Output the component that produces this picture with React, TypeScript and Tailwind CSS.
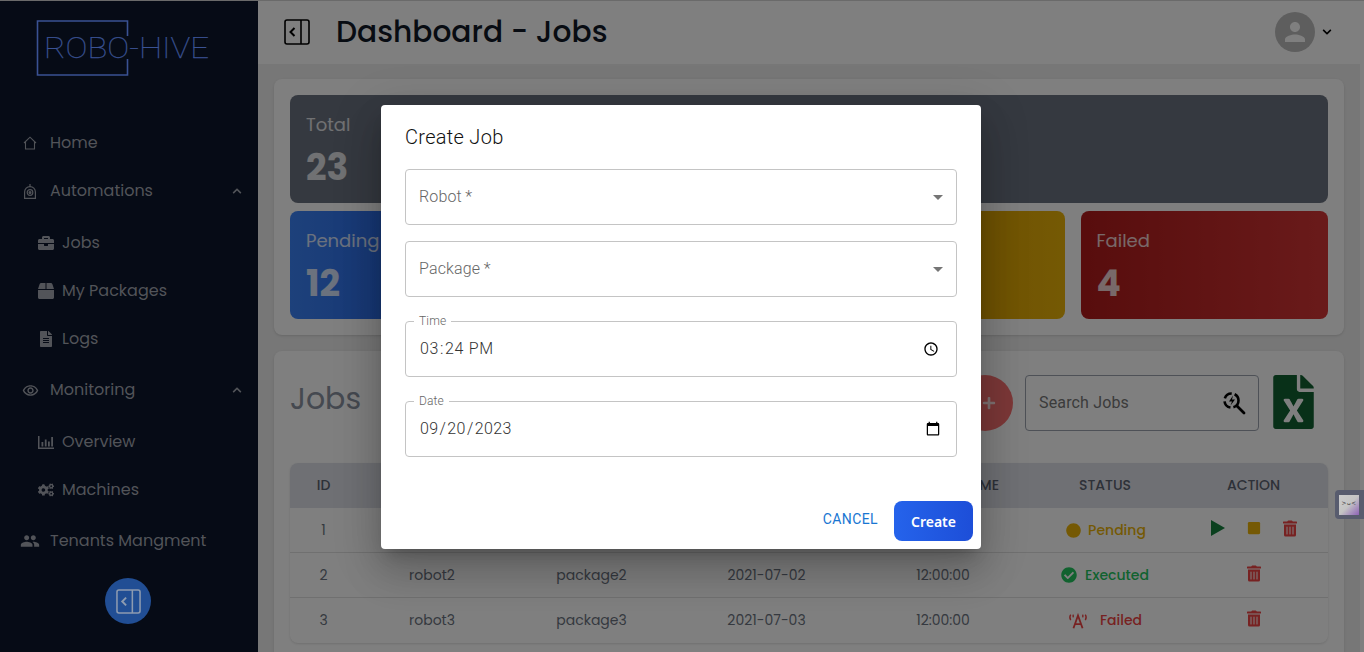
import React from "react";
import { FaBriefcase, FaBox, FaFileAlt, FaCogs, FaFileExcel, FaTrashAlt, FaStop, FaCheckCircle, FaCircle, FaChevronUp, FaChevronDown, FaPlus } from "react-icons/fa";
import { MdPeople, MdPerson, MdArrowDropDown, MdOutlineRemoveRedEye } from "react-icons/md";

const sans = "font-['Poppins','Lato','Inter',sans-serif]";

function Panel({ className = "" }: { className?: string }) {
  return (
    <svg viewBox="0 0 26 26" fill="none" stroke="currentColor" strokeWidth="1.6" className={className}>
      <rect x="1" y="1" width="24" height="24" rx="2" />
      <path d="M17 1v24" />
      <path d="M10.5 9l-4 4 4 4" strokeWidth="2" />
    </svg>
  );
}

function Item({ icon, label, chevron }: { icon: React.ReactNode; label: string; chevron?: boolean }) {
  return (
    <div className="flex h-[48px] items-center pr-[16px] pl-[22px] text-[#525459]">
      <span className="flex w-[28px] items-center">{icon}</span>
      <span className="flex-1 whitespace-nowrap text-[16px]">{label}</span>
      {chevron && <FaChevronUp className="h-[10px] w-[10px]" />}
    </div>
  );
}

function Sub({ icon, label }: { icon: React.ReactNode; label: string }) {
  return (
    <div className="flex h-[48px] items-center pl-[38px] text-[#525459]">
      <span className="flex w-[24px] items-center">{icon}</span>
      <span className="whitespace-nowrap text-[16px]">{label}</span>
    </div>
  );
}

function Sidebar() {
  return (
    <aside className="flex w-[258px] shrink-0 flex-col bg-[#060b16]">
      <div className="relative h-[99px] shrink-0">
        <svg viewBox="0 0 258 99" className="absolute inset-0 h-[99px] w-[258px]" fill="none">
          <path d="M127.5 36V21H37.5V75H127.5V59" stroke="#3a5293" strokeWidth="1.6" />
          <text x="44" y="58" fill="#3a5293" stroke="#3a5293" strokeWidth="0.25" fontSize="29" fontWeight="100" fontFamily="Roboto, sans-serif" textLength="165" lengthAdjust="spacingAndGlyphs">ROBO-HIVE</text>
        </svg>
      </div>
      <div className="h-[20px] shrink-0" />
      <Item
        icon={
          <svg viewBox="0 0 14 14" className="ml-[1px] h-[14px] w-[14px]" fill="none" stroke="currentColor" strokeWidth="1.100">
            <path d="M1 7L7 1.200 13 7M2.500 6v7h9V6" />
          </svg>
        }
        label="Home"
      />
      <Item
        icon={
          <svg viewBox="0 0 12 15" className="ml-[2px] h-[15px] w-[12px]" fill="none" stroke="currentColor" strokeWidth="1.2">
            <path d="M6 0v3" />
            <path d="M.6 14.400V8a5.400 5.400 0 0 1 10.800 0v6.400z" />
            <circle cx="6" cy="8.500" r="2.800" />
            <circle cx="6" cy="8.500" r=".9" fill="currentColor" />
          </svg>
        }
        label="Automations"
        chevron
      />
      <div className="h-[4px] shrink-0" />
      <Sub icon={<FaBriefcase className="h-[16px] w-[16px]" />} label="Jobs" />
      <Sub icon={<FaBox className="h-[16px] w-[16px]" />} label="My Packages" />
      <Sub icon={<FaFileAlt className="ml-[2px] h-[16px] w-[12px]" />} label="Logs" />
      <div className="h-[3px] shrink-0" />
      <Item icon={<MdOutlineRemoveRedEye className="h-[17px] w-[17px]" />} label="Monitoring" chevron />
      <div className="h-[4px] shrink-0" />
      <Sub
        icon={
          <svg viewBox="0 0 16 13" className="h-[13px] w-[16px]" fill="currentColor">
            <path d="M0 0h1.500v11.500H16V13H0z" />
            <path d="M3.500 6h1.800v4.500H3.500zM6.800 3.500h1.800v7H6.800zM10 5.500h1.800v5H10zM13.200 1h1.800v9.500h-1.800z" />
          </svg>
        }
        label="Overview"
      />
      <Sub icon={<FaCogs className="h-[16px] w-[16px]" />} label="Machines" />
      <div className="h-[3px] shrink-0" />
      <Item icon={<MdPeople className="-ml-[2px] h-[20px] w-[20px]" />} label="Tenants Mangment" />
      <div className="flex justify-center pt-[13px] pr-[2px]">
        <div className="flex h-[46px] w-[46px] items-center justify-center rounded-full bg-[#214e94] text-[#8d9bb0]">
          <Panel className="h-[25px] w-[25px]" />
        </div>
      </div>
    </aside>
  );
}

function Stat({ label, value, className }: { label?: string; value?: string; className: string }) {
  return (
    <div className={`h-[108px] rounded-lg px-4 pt-[18px] text-white/80 ${className}`}>
      {label && <div className="text-[18px] leading-[24px]">{label}</div>}
      {value && <div className="mt-[7px] text-[36px] leading-[48px] font-bold">{value}</div>}
    </div>
  );
}

const cols = "grid grid-cols-[67px_150px_169px_181px_172px_152px_147px] items-center text-center";

function Trash() {
  return <FaTrashAlt className="h-[17px] w-[14px] text-[#ef4444]" />;
}

function Row({ id, robot, pack, date, time, status, action, last }: { id: string; robot?: string; pack?: string; date?: string; time?: string; status: React.ReactNode; action: React.ReactNode; last?: boolean }) {
  return (
    <div className={`${cols} h-[45px] text-[14px] text-[#6b7280] ${last ? "" : "border-b border-[#e0e0e0]"}`}>
      <div>{id}</div>
      <div>{robot}</div>
      <div>{pack}</div>
      <div>{date}</div>
      <div>{time}</div>
      <div className="flex items-center justify-center">{status}</div>
      <div className="-mt-[4px] flex items-center justify-center gap-[22px] pr-[2px]">{action}</div>
    </div>
  );
}

function Field({ label }: { label: string }) {
  return (
    <div className="flex h-[56px] items-center justify-between rounded border border-[#c4c4c4] pr-[6px] pl-[13px] text-[16px] tracking-[0.15px] text-[#666]">
      <span className="font-light">{label}{"\u2009"}*</span>
      <MdArrowDropDown className="h-[24px] w-[24px] text-[#757575]" />
    </div>
  );
}

function DateField({ label, type, value, track }: { label: string; type: string; value: string; track: string }) {
  return (
    <div className="relative h-[56px] rounded border border-[#c4c4c4]">
      <span className="absolute -top-[8px] left-[8px] bg-white px-[5px] text-[12px] leading-[14px] font-light tracking-[0.15px] text-[#666]">{label}</span>
      <input
        type={type}
        defaultValue={value}
        className={`h-full w-full rounded bg-transparent pr-[13px] pl-[13px] font-['Roboto',sans-serif] text-[16px] font-light text-[#333] outline-none ${track}`}
      />
    </div>
  );
}

export default function App() {
  return (
    <div className={`relative flex h-[652px] w-[1364px] overflow-hidden bg-white ${sans}`}>
      <Sidebar />
      <div className="flex h-full w-[1102px] shrink-0 flex-col bg-[#eeeeee]">
        <header className="flex h-[64px] shrink-0 items-center bg-white pr-[28px] pl-[26px]">
          <Panel className="h-[26px] w-[26px] text-black" />
          <h1 className="ml-[26px] flex-1 text-[29.7px] font-medium text-[#111827]">Dashboard - Jobs</h1>
          <div className="flex h-[40px] w-[40px] items-center justify-center rounded-full bg-[#bdbdbd]">
            <MdPerson className="h-[30px] w-[30px] text-white" />
          </div>
          <FaChevronDown className="ml-[7px] h-[10px] w-[10px] text-black" />
        </header>
        <main className="flex flex-col gap-4 p-4 pt-[15px]">
          <section className="rounded-lg bg-white p-4 shadow">
            <Stat label="Total" value="23" className="bg-[#6b7280]" />
            <div className="mt-2 grid grid-cols-4 gap-4">
              <Stat label="Pending" value="12" className="bg-gradient-to-r from-[#3b82f6] to-[#1d4ed8]" />
              <Stat className="bg-[#2563eb]" />
              <Stat className="bg-gradient-to-r from-[#ca8a04] to-[#eab308]" />
              <Stat label="Failed" value="4" className="bg-gradient-to-r from-[#b01a1a] to-[#d43535]" />
            </div>
          </section>
          <section className="h-[320px] rounded-lg bg-white p-4 shadow">
            <div className="flex h-[96px] items-start pr-[14px]">
              <h2 className="mt-[9px] flex-1 text-[30px] text-[#8b92a1]">Jobs</h2>
              <div className="mt-[8px] flex h-[56px] w-[56px] items-center justify-center rounded-full bg-[#f87171] pl-[8px] text-white/80">
                <FaPlus className="h-[14px] w-[14px]" />
              </div>
              <div className="mt-[8px] ml-[12px] flex h-[56px] w-[234px] items-center justify-between rounded border border-[#9ca3af] pr-[12px] pl-[13px] font-['Roboto',sans-serif] text-[16px] tracking-[0.15px] text-[#777]">
                <span>Search Jobs</span>
                <svg viewBox="0 0 24 24" className="h-[24px] w-[24px] text-black" fill="none" stroke="currentColor">
                  <circle cx="9.500" cy="9.500" r="7" strokeWidth="2.600" strokeDasharray="9 3" />
                  <path d="M15 15l7 7" strokeWidth="2.800" strokeLinecap="round" />
                  <path d="M11 4.500L7 10.500h3l-1.500 4 4.500-6h-3z" fill="currentColor" stroke="none" />
                </svg>
              </div>
              <FaFileExcel className="mt-[8px] ml-[14px] h-[54px] w-[41px] text-[#116030]" />
            </div>
            <div className="overflow-hidden rounded-lg shadow">
              <div className={`${cols} h-[45px] bg-[#dfe1e8] text-[14px] font-medium text-[#5b6270]`}>
                <div>ID</div>
                <div />
                <div />
                <div />
                <div className="whitespace-nowrap">EXECUTION TIME</div>
                <div>STATUS</div>
                <div className="pr-[2px]">ACTION</div>
              </div>
              <Row
                id="1"
                status={<span className="flex items-center gap-[7px] pl-[2px] font-medium text-[#eab308]"><FaCircle className="h-[15px] w-[15px]" />Pending</span>}
                action={
                  <>
                    <svg viewBox="0 0 14 16" className="h-[16px] w-[14px] text-[#15803d]" fill="currentColor"><path d="M0 0l14 8-14 8z" /></svg>
                    <FaStop className="h-[14px] w-[14px] text-[#eab308]" />
                    <Trash />
                  </>
                }
              />
              <Row
                id="2" robot="robot2" pack="package2" date="2021-07-02" time="12:00:00"
                status={<span className="flex items-center gap-[8px] font-medium text-[#22c55e]"><FaCheckCircle className="h-[16px] w-[16px]" />Executed</span>}
                action={<Trash />}
              />
              <Row
                id="3" robot="robot3" pack="package3" date="2021-07-03" time="12:00:00" last
                status={
                  <span className="flex items-center gap-[12px] font-medium text-[#ef4444]">
                    <svg viewBox="0 0 22 16" className="h-[16px] w-[20px]" fill="none" stroke="currentColor" strokeWidth="2">
                      <path d="M6 16L11 2l5 14M7.500 11.500h7" />
                      <path d="M3 1Q1 4 3 7M6 1Q5 2.500 6 4M19 1q2 3 0 6M16 1q1 1.500 0 3" strokeWidth="1.500" />
                    </svg>
                    Failed
                  </span>
                }
                action={<Trash />}
              />
            </div>
          </section>
        </main>
      </div>

      <div className="absolute top-0 right-0 bottom-0 left-[258px] bg-black/50" />
      <div className="absolute inset-x-0 top-0 h-px bg-[#6a6a6a]" />

      <div className="absolute top-[490px] left-[1335px] flex h-[29px] w-[29px] items-center rounded-l bg-[#585c6e] pl-[4px]">
        <div className="flex h-[20px] w-[20px] items-start justify-center bg-gradient-to-br from-[#cccccc] via-[#c4c4c4] to-[#8f62b5] pt-[5px] font-['DejaVu_Sans',sans-serif] text-[6px] leading-none tracking-[0.5px] text-[#333]">&gt;ᴗ&lt;</div>
      </div>

      <div className="absolute top-[105px] left-[381px] h-[444px] w-[600px] rounded bg-white font-['Roboto',sans-serif] shadow-[0_11px_15px_-7px_rgba(0,0,0,0.2),0_24px_38px_3px_rgba(0,0,0,0.14),0_9px_46px_8px_rgba(0,0,0,0.12)]">
        <div className="flex flex-col px-[24px]">
          <h3 className="pt-[18px] text-[20px] leading-[28px] font-light tracking-[0.3px] text-[#111]">Create Job</h3>
          <div className="mt-[18px] flex flex-col gap-4">
            <Field label="Robot" />
            <Field label="Package" />
          </div>
          <div className="mt-[24px] flex flex-col gap-[24px]">
            <DateField label="Time" type="time" value="15:24" track="tracking-[0.65px]" />
            <DateField label="Date" type="date" value="2023-09-20" track="tracking-[0.4px]" />
          </div>
        </div>
        <div className="absolute right-[8px] bottom-[8px] flex items-center gap-[16px]">
          <span className="mb-[4px] text-[14px] tracking-[0.4px] text-[#1976d2]">CANCEL</span>
          <span className="flex h-[40px] w-[79px] items-center justify-center rounded-lg bg-gradient-to-r from-[#2563eb] to-[#1d4ed8] font-['Noto_Sans',sans-serif] text-[14px] font-semibold text-white">Create</span>
        </div>
      </div>
    </div>
  );
}
